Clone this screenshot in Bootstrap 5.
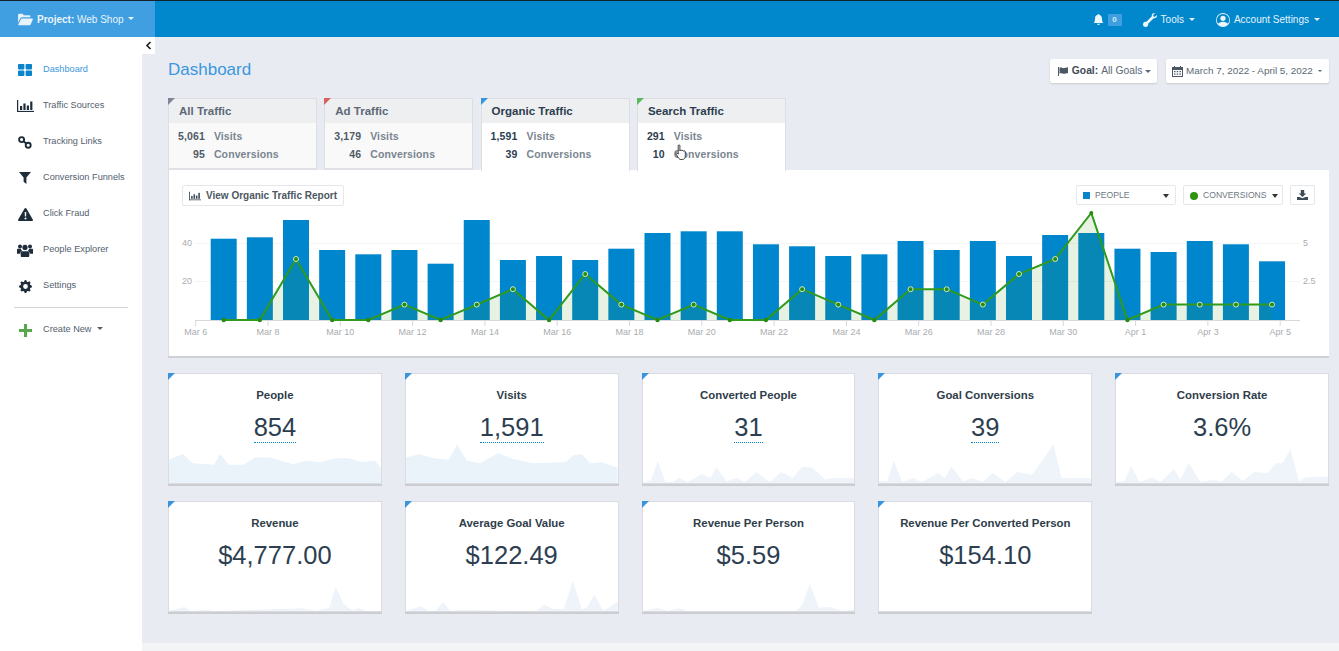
<!DOCTYPE html>
<html lang="en">
<head>
<meta charset="utf-8">
<title>Dashboard</title>
<link href="https://cdn.jsdelivr.net/npm/bootstrap@5.3.0/dist/css/bootstrap.min.css" rel="stylesheet">
<style>
html,body{height:100%;}
body{font-family:"Liberation Sans",Arial,sans-serif;background:#e9ebf2;color:#2c3e50;overflow:hidden;width:1339px;height:651px;}
.topbar{height:37px;background:#0087cc;border-top:1px solid #15222c;padding:0;flex-wrap:nowrap;font-size:10px;color:#e6f3fb;}
.brandbox{width:155px;height:36px;background:#3f9fe0;color:#eaf5fc;padding-left:18px;gap:4px;font-size:10px;}
.brandbox svg{width:15px;height:13px;fill:#e6f3fb;flex:none;}
.brandbox .dropdown-toggle::after{margin-left:4px;}
.topitems{padding-right:19px;padding-top:1px;}
.topitem{color:#e6f3fb;font-size:10px;}
.topitem.dropdown-toggle::after{margin-left:5px;}
.topitem svg{fill:#eaf5fc;display:block;flex:none;}
.zero-pill{background:#3f9fe0;color:#d5ebf9;font-size:8px;font-weight:700;width:14px;height:12px;line-height:12px;text-align:center;border-radius:1px;}
.shell{height:614px;}
.sidecol{width:142px;flex:none;background:#fff;position:relative;padding-top:15px;}
.collapse-tab{position:absolute;left:142px;top:0;width:13px;height:17px;background:#fff;color:#333;}
.side-item{height:36px;color:#53606d;font-size:9.2px;text-decoration:none;}
.side-item.is-current{color:#3a97dd;}
.side-item .dropdown-toggle::after{margin-left:5px;border-width:.38em .38em 0;}
.side-ico{width:43px;flex:none;display:flex;justify-content:center;padding-left:7px;padding-right:0;}
.side-ico svg{display:block;fill:#1f2d3a;}
.side-rule{margin:3px 14px 4px 14px;border-top:1px solid #cfd2d6;opacity:1;height:0;}
.maincol{flex:1;display:flex;flex-direction:column;min-width:0;}
.mainpad{flex:1;padding:22px 10px 0 26px;}
.footstrip{height:8px;background:#f3f4f6;}
.pagehead{height:24px;margin-bottom:15px;}
.pagetitle{font-size:17px;color:#3a97dd;font-weight:400;margin:1px 0 0;line-height:20px;}
.toolbtn{background:#fff;border:0;border-radius:2px;box-shadow:0 1px 2px rgba(0,0,0,.14);height:24px;font-size:10.3px;color:#5b6774;padding:0 6px 0 8px;display:flex;align-items:center;}
.toolbtn.datebtn{font-size:9.9px;width:163px;padding:0 5px 0 6px;}
.toolbtn.datebtn::after{margin-left:5px;}
.toolbtn b{color:#3d4a57;margin:0 3px 0 4px;}
.toolbtn svg{fill:#4b5763;display:block;flex:none;}
.tabstrip{gap:7.3px;height:72px;}
.traffic-tab{width:149px;position:relative;background:#f9f9fa;border:1px solid #dcdee3;border-bottom:0;box-shadow:inset 0 -2px 0 #dfe1e5;}
.traffic-tab.is-open{background:#fff;box-shadow:none;height:73px;z-index:2;border-bottom:0;}
.traffic-tab::before,.metric-box::before{content:"";position:absolute;left:-1px;top:-1px;border-style:solid;border-width:7px 7px 0 0;border-color:var(--corner) transparent transparent transparent;}
.tabhead{height:24px;background:#eeeff1;font-size:11.5px;font-weight:700;line-height:24px;padding-left:10px;color:#5d6975;}
.is-open .tabhead{color:#2c3e50;}
.tabbody{padding:4px 0 0 9px;display:grid;grid-template-columns:auto 1fr;column-gap:9px;grid-auto-rows:18px;line-height:18px;font-size:10.5px;font-weight:700;color:#7a8590;letter-spacing:.12px;}
.tabbody span{text-align:right;color:#4f5b67;}
.is-open .tabbody span{color:#2c3e50;}
.chartpanel{background:#fff;box-shadow:0 2px 0 #cfd1d5;height:186px;padding:15px 14px 0 13px;position:relative;border-left:1px solid #dcdee3;}
.reportbtn{height:21px;border:1px solid #e6e7ea;border-radius:2px;background:#fff;font-size:10px;font-weight:700;color:#4b5763;padding:0 6px;display:flex;align-items:center;gap:5px;}
.reportbtn svg{fill:#3d4a57;display:block;flex:none;}
.seriespick{width:100px;height:20px;border:1px solid #e6e7ea;border-radius:2px;background:#fff;font-size:8.6px;color:#6d7883;padding:1px 6px 0;display:flex;align-items:center;gap:5px;}
.seriespick i{display:block;width:7px;height:7px;flex:none;}
.seriespick i.dotmark{width:8px;height:8px;border-radius:50%;background:#2f9411;}
.seriespick i.boxmark{background:#0a84cb;}
.seriespick .arrow{margin-left:auto;border-top:4px solid #333;border-left:3px solid transparent;border-right:3px solid transparent;}
.dlbtn{width:25px;height:20px;border:1px solid #e6e7ea;border-radius:2px;background:#fff;display:flex;align-items:center;justify-content:center;}
.chartsvg{display:block;margin:1px 0 0 -14px;}
.chartsvg text{font-family:"Liberation Sans",Arial,sans-serif;font-size:9px;fill:#a9acb0;}
.metricgrid{display:grid;grid-template-columns:repeat(5,1fr);column-gap:23px;row-gap:17px;margin-top:17px;}
.metric-box{position:relative;height:111px;background:#fff;border:1px solid #dadce1;border-radius:0;box-shadow:0 2px 0 #cbcdd1;--corner:#3a94dc;text-align:center;display:flex;flex-direction:column;overflow:visible;}
.metric-title{font-size:11.4px;font-weight:700;line-height:16px;margin-top:13px;color:#2f3d4a;}
.metric-value{font-size:25.5px;line-height:30px;margin-top:9px;color:#2c3e50;}
.metric-value span{display:inline-block;border-bottom:1px dotted #0087cc;line-height:30px;}
.sparksvg{display:block;width:100%;height:38px;margin-top:auto;fill:#eaf2fa;}
.sparksvg.paler{fill:#eef4fa;}
.handcursor{position:absolute;left:675px;top:144px;z-index:5;display:block;}
</style>
</head>
<body>
<nav class="navbar topbar d-flex justify-content-between align-items-center">
  <div class="brandbox d-flex align-items-center">
    <svg viewBox="0 0 16 14"><path d="M0 2.2C0 1.4.6.8 1.4.8h3.4l1.5 1.6h5.8c.7 0 1.2.5 1.2 1.2v1.1H4.2c-.9 0-1.5.4-1.9 1.2L0 10.6z"/><path d="M3.6 6h11.6c.6 0 .9.5.7 1l-2.3 5.4c-.2.5-.6.8-1.2.8H.9c-.6 0-.9-.5-.6-1z"/></svg>
    <span class="dropdown-toggle"><b>Project:</b> Web Shop</span>
  </div>
  <div class="topitems d-flex align-items-center">
    <svg width="11" height="11" viewBox="0 0 16 16" fill="#eaf5fc" class="me-1"><path d="M8 16a2 2 0 0 0 2-2H6a2 2 0 0 0 2 2zm.995-14.901a1 1 0 1 0-1.99 0A5.002 5.002 0 0 0 3 6c0 1.098-.5 6-2 7h14c-1.5-1-2-5.902-2-7 0-2.42-1.72-4.44-4.005-4.901z"/></svg>
    <span class="zero-pill">0</span>
    <span class="topitem d-flex align-items-center dropdown-toggle" style="margin-left:21px">
      <svg width="14" height="14" viewBox="0 0 16 16" class="me-1"><g transform="translate(16 0) scale(-1 1)"><path d="M.102 2.223A3.004 3.004 0 0 0 3.78 5.897l6.341 6.252A3.003 3.003 0 0 0 13 16a3 3 0 1 0-.851-5.878L5.897 3.781A3.004 3.004 0 0 0 2.223.1l2.141 2.142L4 4l-1.757.364L.102 2.223z"/></g></svg>Tools</span>
    <span class="topitem d-flex align-items-center dropdown-toggle" style="margin-left:21px">
      <svg width="14" height="14" viewBox="0 0 16 16" style="margin-right:4px"><path d="M11 6a3 3 0 1 1-6 0 3 3 0 0 1 6 0z"/><path fill-rule="evenodd" d="M0 8a8 8 0 1 1 16 0A8 8 0 0 1 0 8zm8-7a7 7 0 0 0-5.468 11.37C3.242 11.226 4.805 10 8 10s4.757 1.225 5.468 2.37A7 7 0 0 0 8 1z"/></svg>Account Settings</span>
  </div>
</nav>
<div class="shell d-flex">
  <aside class="sidecol">
    <div class="collapse-tab d-flex align-items-center justify-content-center">
      <svg width="7" height="9" viewBox="0 0 7 9"><path d="M5.5 1 2 4.5 5.5 8" fill="none" stroke="#222" stroke-width="1.7"/></svg>
    </div>
    <a class="side-item is-current d-flex align-items-center" href="#"><span class="side-ico"><svg width="14" height="12" viewBox="0 0 14 12" style="fill:#0a84cb"><rect width="6.4" height="5.4" rx=".8"/><rect x="7.6" width="6.4" height="5.4" rx=".8"/><rect y="6.6" width="6.4" height="5.4" rx=".8"/><rect x="7.6" y="6.6" width="6.4" height="5.4" rx=".8"/></svg></span>Dashboard</a>
    <a class="side-item d-flex align-items-center" href="#"><span class="side-ico"><svg width="17" height="12" viewBox="0 0 17 12"><rect y="0" width="1.2" height="12"/><rect y="10.9" width="17" height="1.1"/><rect x="3" y="6" width="2.2" height="4"/><rect x="6.4" y="3.5" width="2.2" height="6.5"/><rect x="9.8" y="5.5" width="2.2" height="4.5"/><rect x="13.2" y="1.5" width="2.2" height="8.5"/></svg></span>Traffic Sources</a>
    <a class="side-item d-flex align-items-center" href="#"><span class="side-ico"><svg width="14" height="13" viewBox="0 0 14 13" style="fill:none;stroke:#1f2d3a;stroke-width:1.9"><circle cx="3.6" cy="3.6" r="2.5"/><circle cx="10.2" cy="9.2" r="2.5"/><path d="M5.6 5.2 8.2 7.5"/></svg></span>Tracking Links</a>
    <a class="side-item d-flex align-items-center" href="#"><span class="side-ico"><svg width="12" height="12" viewBox="0 0 12 12"><path d="M0 0h12L7.4 5.6V12L4.6 9.8V5.6z"/></svg></span>Conversion Funnels</a>
    <a class="side-item d-flex align-items-center" href="#"><span class="side-ico"><svg width="15" height="13" viewBox="0 0 15 13"><path fill-rule="evenodd" d="M7.5 0c.4 0 .7.2.9.5l6.4 11c.4.7-.1 1.5-.9 1.5H1.1c-.8 0-1.3-.8-.9-1.5L6.6.5c.2-.3.5-.5.9-.5zM6.7 4l.2 4.6h1.2L8.3 4zm.8 5.6a1 1 0 1 0 0 2 1 1 0 0 0 0-2z"/></svg></span>Click Fraud</a>
    <a class="side-item d-flex align-items-center" href="#"><span class="side-ico"><svg width="16" height="13" viewBox="0 0 16 13"><circle cx="3" cy="2.4" r="2"/><circle cx="13" cy="2.4" r="2"/><circle cx="8" cy="3.4" r="2.6"/><path d="M0 5.6C0 5 .5 4.8 1 4.8h2.8c.3.9.8 1.5 1.4 1.9-1.2.5-2 1.6-2.1 3H0zM16 5.6c0-.6-.5-.8-1-.8h-2.8c-.3.9-.8 1.5-1.4 1.9 1.2.5 2 1.6 2.1 3H16zM5.3 7.2h5.4c1 0 1.6.9 1.6 2v2.5c0 .7-.5 1.3-1.2 1.3H4.9c-.7 0-1.2-.6-1.2-1.3V9.200c0-1.100.6-2 1.600-2z"/></svg></span>People Explorer</a>
    <a class="side-item d-flex align-items-center" href="#"><span class="side-ico"><svg width="13" height="13" viewBox="0 0 16 16"><path d="M9.405 1.05c-.413-1.4-2.397-1.4-2.81 0l-.1.34a1.464 1.464 0 0 1-2.105.872l-.31-.17c-1.283-.698-2.686.705-1.987 1.987l.169.311c.446.82.023 1.841-.872 2.105l-.34.1c-1.4.413-1.4 2.397 0 2.81l.34.1a1.464 1.464 0 0 1 .872 2.105l-.17.31c-.698 1.283.705 2.686 1.987 1.987l.311-.169a1.464 1.464 0 0 1 2.105.872l.1.34c.413 1.4 2.397 1.4 2.81 0l.1-.34a1.464 1.464 0 0 1 2.105-.872l.31.17c1.283.698 2.686-.705 1.987-1.987l-.169-.311a1.464 1.464 0 0 1 .872-2.105l.34-.1c1.4-.413 1.4-2.397 0-2.81l-.34-.1a1.464 1.464 0 0 1-.872-2.105l.17-.31c.698-1.283-.705-2.686-1.987-1.987l-.311.169a1.464 1.464 0 0 1-2.105-.872l-.1-.34zM8 10.93a2.929 2.929 0 1 1 0-5.86 2.929 2.929 0 0 1 0 5.858z"/></svg></span>Settings</a>
    <div class="side-rule"></div>
    <a class="side-item d-flex align-items-center" href="#"><span class="side-ico"><svg width="13" height="13" viewBox="0 0 13 13" style="fill:#55a94b"><rect x="5" width="3" height="13"/><rect y="5" width="13" height="3"/></svg></span><span class="dropdown-toggle">Create New</span></a>
  </aside>
  <main class="maincol">
    <div class="mainpad">
      <div class="pagehead d-flex justify-content-between align-items-start">
        <h1 class="pagetitle">Dashboard</h1>
        <div class="d-flex" style="gap:9px">
          <button class="toolbtn dropdown-toggle" type="button"><svg width="10" height="9" viewBox="0 0 10 9"><path d="M0 0h1v9H0zM1.500.8c2-.8 3 .6 4.400.3 1.200-.2 2.400-.5 4.100-.8v5.600c-1.600.3-2.900.8-4.100.8-1.500 0-2.400-1-4.400-.3z"/></svg><b>Goal:</b>All Goals</button>
          <button class="toolbtn datebtn dropdown-toggle" type="button"><svg width="11" height="11" viewBox="0 0 11 11" style="margin-right:3px"><path fill-rule="evenodd" d="M2 0h1v1h5V0h1v1h2v10H0V1h2zM1 4v6h9V4z"/><path d="M2 5h1.500v1.200H2zM4.700 5h1.500v1.200H4.700zM7.400 5h1.500v1.200H7.400zM2 7.500h1.500v1.200H2zM4.700 7.500h1.500v1.200H4.700zM7.400 7.500h1.500v1.200H7.400z"/></svg>March 7, 2022 - April 5, 2022</button>
        </div>
      </div>
      <div class="tabstrip d-flex">
        <div class="traffic-tab" style="--corner:#7d8596"><div class="tabhead">All Traffic</div><div class="tabbody"><span>5,061</span><div>Visits</div><span>95</span><div>Conversions</div></div></div>
        <div class="traffic-tab" style="--corner:#d9605f"><div class="tabhead">Ad Traffic</div><div class="tabbody"><span>3,179</span><div>Visits</div><span>46</span><div>Conversions</div></div></div>
        <div class="traffic-tab is-open" style="--corner:#3a94dc"><div class="tabhead">Organic Traffic</div><div class="tabbody"><span>1,591</span><div>Visits</div><span>39</span><div>Conversions</div></div></div>
        <div class="traffic-tab is-open" style="--corner:#5cb85c"><div class="tabhead">Search Traffic</div><div class="tabbody"><span>291</span><div>Visits</div><span>10</span><div>Conversions</div></div></div>
      </div>
      <section class="chartpanel">
        <div class="d-flex justify-content-between align-items-start">
          <button class="reportbtn" type="button"><svg width="12" height="10" viewBox="0 0 17 12"><rect width="1.200" height="12"/><rect y="10.900" width="17" height="1.100"/><rect x="3" y="6" width="2.200" height="4"/><rect x="6.400" y="3.500" width="2.200" height="6.500"/><rect x="9.800" y="5.500" width="2.200" height="4.500"/><rect x="13.200" y="1.500" width="2.200" height="8.500"/></svg>View Organic Traffic Report</button>
          <div class="d-flex" style="gap:7px">
            <div class="seriespick"><i class="boxmark"></i>PEOPLE<span class="arrow"></span></div>
            <div class="seriespick"><i class="dotmark"></i>CONVERSIONS<span class="arrow"></span></div>
            <div class="dlbtn"><svg width="11" height="10" viewBox="0 0 11 10"><path fill="#3d4a57" d="M3.800 0h3.400v3.500h2L5.500 7 1.800 3.500h2zM0 7h2.500l3 1.300L8.500 7H11v3H0z"/></svg></div>
          </div>
        </div>
        <svg class="chartsvg" width="1160" height="142" viewBox="168 207 1160 142">
          <path d="M195 243.500H1300M195 281.500H1300" stroke="#f4f4f5" stroke-width="1"/>
          <g fill="#0086cc">
            <rect x="210.7" y="238.7" width="26" height="81.300"/><rect x="246.85" y="237.3" width="26" height="82.700"/><rect x="283" y="220" width="26" height="100"/><rect x="319.15" y="250" width="26" height="70"/><rect x="355.3" y="254.3" width="26" height="65.700"/><rect x="391.45" y="250" width="26" height="70"/><rect x="427.6" y="263.7" width="26" height="56.300"/><rect x="463.75" y="220" width="26" height="100"/><rect x="499.9" y="260" width="26" height="60"/><rect x="536.05" y="256" width="26" height="64"/><rect x="572.2" y="260" width="26" height="60"/><rect x="608.35" y="248.7" width="26" height="71.300"/><rect x="644.5" y="233" width="26" height="87"/><rect x="680.65" y="231.3" width="26" height="88.700"/><rect x="716.8" y="231.3" width="26" height="88.700"/><rect x="752.95" y="244.3" width="26" height="75.700"/><rect x="789.1" y="246.3" width="26" height="73.700"/><rect x="825.25" y="256" width="26" height="64"/><rect x="861.4" y="254.3" width="26" height="65.700"/><rect x="897.55" y="241" width="26" height="79"/><rect x="933.7" y="250" width="26" height="70"/><rect x="969.85" y="241" width="26" height="79"/><rect x="1006" y="256" width="26" height="64"/><rect x="1042.15" y="235" width="26" height="85"/><rect x="1078.3" y="233" width="26" height="87"/><rect x="1114.45" y="248.7" width="26" height="71.300"/><rect x="1150.6" y="252" width="26" height="68"/><rect x="1186.75" y="241" width="26" height="79"/><rect x="1222.9" y="244.3" width="26" height="75.700"/><rect x="1259.05" y="261.3" width="26" height="58.700"/>
          </g>
          <path fill="rgba(60,150,20,.12)" d="M223.7 320L259.85 320L296 259L332.15 320L368.3 320L404.45 304.6L440.6 320L476.75 304.6L512.9 289.2L549.05 320L585.2 274L621.35 304.6L657.5 320L693.65 304.6L729.8 320L765.95 320L802.1 289.2L838.25 304.6L874.4 320L910.55 289.2L946.7 289.2L982.85 304.6L1019 274L1055.15 259L1091.3 213L1127.45 320L1163.6 304.6L1199.75 304.6L1235.9 304.6L1272.05 304.6V320Z"/>
          <path d="M195 320.500H1300" stroke="#d5d8dc" stroke-width="1"/>
          <path d="M195.700 320v6M268 320v6M340.300 320v6M412.600 320v6M484.900 320v6M557.200 320v6M629.500 320v6M701.800 320v6M774.100 320v6M846.400 320v6M918.700 320v6M991 320v6M1063.300 320v6M1135.600 320v6M1207.900 320v6M1280.200 320v6" stroke="#d5d8dc" stroke-width="1"/>
          <polyline fill="none" stroke="#2f9a1c" stroke-width="2" points="223.7,320 259.85,320 296,259 332.15,320 368.3,320 404.45,304.6 440.6,320 476.75,304.6 512.9,289.2 549.05,320 585.2,274 621.35,304.6 657.5,320 693.65,304.6 729.8,320 765.95,320 802.1,289.2 838.25,304.6 874.4,320 910.55,289.2 946.7,289.2 982.85,304.6 1019,274 1055.15,259 1091.3,213 1127.45,320 1163.6,304.6 1199.75,304.6 1235.9,304.6 1272.05,304.6"/>
          <g fill="#258c10">
            <circle cx="223.7" cy="320" r="2.200"/><circle cx="259.85" cy="320" r="2.200"/><circle cx="332.15" cy="320" r="2.200"/><circle cx="368.3" cy="320" r="2.200"/><circle cx="440.6" cy="320" r="2.200"/><circle cx="549.05" cy="320" r="2.200"/><circle cx="657.5" cy="320" r="2.200"/><circle cx="729.8" cy="320" r="2.200"/><circle cx="765.95" cy="320" r="2.200"/><circle cx="874.4" cy="320" r="2.200"/><circle cx="1091.3" cy="213" r="2"/><circle cx="1127.45" cy="320" r="2.200"/>
          </g>
          <g fill="#258c10" stroke="#dff0d4" stroke-width=".9">
            <circle cx="296" cy="259" r="2.500"/><circle cx="404.45" cy="304.6" r="2.500"/><circle cx="476.75" cy="304.6" r="2.500"/><circle cx="512.9" cy="289.2" r="2.500"/><circle cx="585.2" cy="274" r="2.500"/><circle cx="621.35" cy="304.6" r="2.500"/><circle cx="693.65" cy="304.6" r="2.500"/><circle cx="802.1" cy="289.2" r="2.500"/><circle cx="838.25" cy="304.6" r="2.500"/><circle cx="910.55" cy="289.2" r="2.500"/><circle cx="946.7" cy="289.2" r="2.500"/><circle cx="982.85" cy="304.6" r="2.500"/><circle cx="1019" cy="274" r="2.500"/><circle cx="1055.15" cy="259" r="2.500"/><circle cx="1163.6" cy="304.6" r="2.500"/><circle cx="1199.75" cy="304.6" r="2.500"/><circle cx="1235.9" cy="304.6" r="2.500"/><circle cx="1272.05" cy="304.6" r="2.500"/>
          </g>
          <text x="182" y="246">40</text><text x="182" y="284">20</text>
          <text x="1303" y="246">5</text><text x="1303" y="284">2.5</text>
          <g text-anchor="middle">
            <text x="195.700" y="334.500">Mar 6</text><text x="268" y="334.500">Mar 8</text><text x="340.300" y="334.500">Mar 10</text><text x="412.600" y="334.500">Mar 12</text><text x="484.900" y="334.500">Mar 14</text><text x="557.200" y="334.500">Mar 16</text><text x="629.500" y="334.500">Mar 18</text><text x="701.800" y="334.500">Mar 20</text><text x="774.100" y="334.500">Mar 22</text><text x="846.400" y="334.500">Mar 24</text><text x="918.700" y="334.500">Mar 26</text><text x="991" y="334.500">Mar 28</text><text x="1063.300" y="334.500">Mar 30</text><text x="1135.600" y="334.500">Apr 1</text><text x="1207.900" y="334.500">Apr 3</text><text x="1280.200" y="334.500">Apr 5</text>
          </g>
        </svg>
      </section>
      <div class="metricgrid">
        <div class="card metric-box"><div class="metric-title">People</div><div class="metric-value"><span>854</span></div><svg class="sparksvg" viewBox="0 240 644 115" preserveAspectRatio="none"><path d="M0 285L42 267L72 295L137 300L155 267L182 300L227 300L262 278L307 278L377 298L417 288L457 292L507 280L547 280L587 292L627 288L644 310V355H0Z"/></svg></div>
        <div class="card metric-box"><div class="metric-title">Visits</div><div class="metric-value"><span>1,591</span></div><svg class="sparksvg" viewBox="0 240 644 115" preserveAspectRatio="none"><path d="M0 278L40 268L85 280L130 285L155 238L185 288L225 295L280 265L325 282L385 295L485 292L510 270L535 268L560 295L595 292L643 308V355H0Z"/></svg></div>
        <div class="card metric-box"><div class="metric-title">Converted People</div><div class="metric-value"><span>31</span></div><svg class="sparksvg paler" viewBox="0 240 644 115" preserveAspectRatio="none"><path d="M0 355L25 345L45 288L68 352L90 352L110 340L135 352L180 328L205 340L223 308L255 350L285 340L310 352L345 322L385 352L420 322L455 340L485 305L515 308L555 345L570 340L644 340V355Z"/></svg></div>
        <div class="card metric-box"><div class="metric-title">Goal Conversions</div><div class="metric-value"><span>39</span></div><svg class="sparksvg paler" viewBox="0 240 644 115" preserveAspectRatio="none"><path d="M0 350L25 350L45 288L70 352L105 340L130 352L180 325L200 340L220 305L255 350L285 340L315 352L345 325L385 352L420 322L465 330L495 290L530 238L555 340L644 340V355H0Z"/></svg></div>
        <div class="card metric-box"><div class="metric-title">Conversion Rate</div><div class="metric-value">3.6%</div><svg class="sparksvg paler" viewBox="0 240 644 115" preserveAspectRatio="none"><path d="M0 352L26 350L46 303L71 352L111 338L136 352L176 313L196 345L221 293L256 352L296 345L321 352L351 322L386 348L421 322L461 325L486 295L506 295L531 252L556 350L576 338L644 335V355H0Z"/></svg></div>
        <div class="card metric-box"><div class="metric-title">Revenue</div><div class="metric-value">$4,777.00</div><svg class="sparksvg paler" viewBox="0 240 644 115" preserveAspectRatio="none"><path d="M0 355L47 343L67 355L112 351L137 355L407 347L447 355L487 345L507 283L532 335L557 353L577 347L602 355H644Z"/></svg></div>
        <div class="card metric-box"><div class="metric-title">Average Goal Value</div><div class="metric-value">$122.49</div><svg class="sparksvg paler" viewBox="0 240 644 115" preserveAspectRatio="none"><path d="M0 355L45 341L70 355L90 355L113 327L135 355L165 352L395 355L420 335L450 350L480 350L507 263L535 350L550 345L573 305L600 355L644 327V355Z"/></svg></div>
        <div class="card metric-box"><div class="metric-title">Revenue Per Person</div><div class="metric-value">$5.59</div><svg class="sparksvg paler" viewBox="0 240 644 115" preserveAspectRatio="none"><path d="M0 355L45 345L75 355L110 347L135 355L465 355L485 335L507 273L535 345L570 343L605 355L644 350V355Z"/></svg></div>
        <div class="card metric-box"><div class="metric-title">Revenue Per Converted Person</div><div class="metric-value">$154.10</div></div>
      </div>
    </div>
    <div class="footstrip"></div>
  </main>
</div>
<svg class="handcursor" width="13" height="18" viewBox="0 0 13 18"><path fill="#fff" stroke="#2a2a2a" stroke-width=".9" d="M3.200 1.600c0-1 1.700-1 1.700 0v5.300c.2-1 1.800-1 1.800.1 .2-.9 1.800-.8 1.800.3 .3-.8 1.800-.6 1.800.5v4.200c0 2-1 3.500-3 3.500H6c-1.300 0-2-.7-2.600-1.700L1 10c-.5-.9.700-1.800 1.400-1l.8 1.100z"/></svg>
<script src="https://cdn.jsdelivr.net/npm/bootstrap@5.3.0/dist/js/bootstrap.bundle.min.js"></script>
</body>
</html>
